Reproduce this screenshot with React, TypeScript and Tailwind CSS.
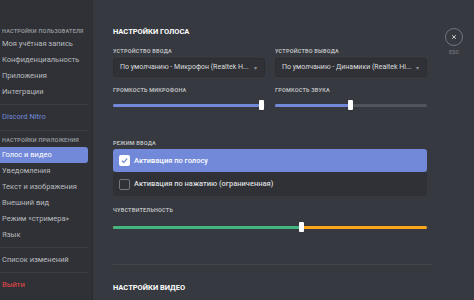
import React from "react";

const userItems = ["Моя учётная запись", "Конфиденциальность", "Приложения", "Интеграции"];
const appItems = ["Уведомления", "Текст и изображения", "Внешний вид", "Режим «стримера»", "Язык"];

const SideHeader = ({ text }: { text: string }) => (
  <div className="h-[10px] pl-[2px] text-[5.5px] font-bold leading-[10px] tracking-[0.2px] text-[#8e9297] uppercase whitespace-nowrap">
    {text}
  </div>
);

const SideItem = ({ text, active, color }: { text: string; active?: boolean; color?: string }) => (
  <div
    className={`flex h-[16px] w-[88px] items-center rounded-r-[3px] pl-[2px] text-[7.5px] whitespace-nowrap ${
      active ? "bg-[#7289da] text-white" : color ? color : "text-[#b9bbbe]"
    }`}
  >
    {text}
  </div>
);

const Sep = () => <div className="my-[4px] h-px w-[88px] bg-[#3b3e44]" />;

const Label = ({ text }: { text: string }) => (
  <div className="h-[8px] text-[5.5px] font-bold leading-[8px] tracking-[0.2px] text-[#b9bbbe] uppercase whitespace-nowrap">
    {text}
  </div>
);

const Select = ({ text }: { text: string }) => (
  <div className="mt-[3px] flex h-[19px] items-center justify-between rounded-[3px] border border-[#2a2c31] bg-[#2f3136] pl-[6px] pr-[7px]">
    <span className="text-[7px] text-[#dcddde] whitespace-nowrap">{text}</span>
    <span className="text-[6px] text-[#8e9297]">▾</span>
  </div>
);

const Slider = ({ fill, pct }: { fill: string; pct: number }) => (
  <div className="relative mt-[6px] h-[10px]">
    <div className="absolute left-0 right-0 top-[4px] h-[3px] rounded-full bg-[#4f545c]" />
    <div className={`absolute left-0 top-[4px] h-[3px] rounded-full ${fill}`} style={{ width: `${pct}%` }} />
    <div
      className="absolute top-0 h-[10px] w-[5px] rounded-[1px] bg-white shadow"
      style={{ left: `calc(${pct}% - 3px)` }}
    />
  </div>
);

export default function App() {
  return (
    <div
      className="flex h-[300px] w-[474px] overflow-hidden bg-[#36393f]"
      style={{ fontFamily: 'Roboto, "Noto Sans", sans-serif' }}
    >
      {/* sidebar */}
      <div className="relative w-[93px] shrink-0 bg-[#2f3136] pt-[26px]">
        <SideHeader text="Настройки пользователя" />
        {userItems.map((t) => (
          <SideItem key={t} text={t} />
        ))}
        <Sep />
        <SideItem text="Discord Nitro" color="text-[#7289da]" />
        <div className="mt-[5px]">
          <Sep />
        </div>
        <SideHeader text="Настройки приложения" />
        <div className="mt-[2px]">
          <SideItem text="Голос и видео" active />
        </div>
        {appItems.map((t) => (
          <SideItem key={t} text={t} />
        ))}
        <Sep />
        <SideItem text="Список изменений" />
        <Sep />
        <SideItem text="Выйти" color="text-[#f04747]" />
        <div className="absolute right-0 top-[40px] h-[260px] w-[2px] rounded-full bg-[#2b2d31]" />
      </div>

      {/* content */}
      <div className="flex flex-1 pl-[20px]">
        <div className="w-[319px] pt-[27px]">
          <div className="h-[10px] text-[7.5px] font-bold leading-[10px] text-white uppercase">Настройки голоса</div>

          <div className="mt-[10px] grid w-[314px] grid-cols-2 gap-x-[10px]">
            <div>
              <Label text="Устройство ввода" />
              <Select text="По умолчанию - Микрофон (Realtek H..." />
              <div className="mt-[9px]">
                <Label text="Громкость микрофона" />
              </div>
              <Slider fill="bg-[#7289da]" pct={98} />
            </div>
            <div>
              <Label text="Устройство вывода" />
              <Select text="По умолчанию - Динамики (Realtek Hi..." />
              <div className="mt-[9px]">
                <Label text="Громкость звука" />
              </div>
              <Slider fill="bg-[#7289da]" pct={50} />
            </div>
          </div>

          <div className="mt-[29px]">
            <Label text="Режим ввода" />
          </div>
          <div className="mt-[2px] w-[314px]">
            <div className="flex h-[23px] items-center rounded-[3px] bg-[#7289da] pl-[6px]">
              <div className="flex h-[11px] w-[11px] items-center justify-center rounded-[2px] bg-white">
                <svg viewBox="0 0 12 12" className="h-[9px] w-[9px]">
                  <path d="M2.5 6.2 L5 8.5 L9.5 3.5" fill="none" stroke="#7289da" strokeWidth="1.8" />
                </svg>
              </div>
              <span className="ml-[4px] text-[7.5px] font-medium text-white">Активация по голосу</span>
            </div>
            <div className="flex h-[24px] items-center rounded-[3px] bg-[#2f3136] pl-[6px]">
              <div className="h-[11px] w-[11px] rounded-[2px] border border-[#72767d]" />
              <span className="ml-[4px] text-[7.5px] font-medium text-[#dcddde]">
                Активация по нажатию (ограниченная)
              </span>
            </div>
          </div>

          <div className="mt-[10px]">
            <Label text="Чувствительность" />
          </div>
          <div className="w-[314px]">
            <div className="relative mt-[8px] h-[10px]">
              <div className="absolute left-0 right-0 top-[4px] h-[3px] rounded-full bg-[#faa61a]" />
              <div className="absolute left-0 top-[4px] h-[3px] w-[188px] rounded-l-full bg-[#43b581]" />
              <div className="absolute left-[186px] top-0 h-[10px] w-[5px] rounded-[1px] bg-white" />
            </div>
          </div>

          <div className="mt-[32px] h-px w-[319px] bg-[#42454a]" />
          <div className="mt-[18px] h-[10px] text-[7.5px] font-bold leading-[10px] text-white uppercase">
            Настройки видео
          </div>
        </div>

        <div className="ml-[13px] flex flex-col items-center pt-[28px]">
          <div className="flex h-[18px] w-[18px] items-center justify-center rounded-full border border-[#72767d]">
            <svg viewBox="0 0 10 10" className="h-[6px] w-[6px]">
              <path d="M2 2 L8 8 M8 2 L2 8" stroke="#dcddde" strokeWidth="1.5" />
            </svg>
          </div>
          <div className="mt-[2px] text-[5.5px] font-semibold text-[#72767d]">ESC</div>
        </div>
      </div>
    </div>
  );
}
